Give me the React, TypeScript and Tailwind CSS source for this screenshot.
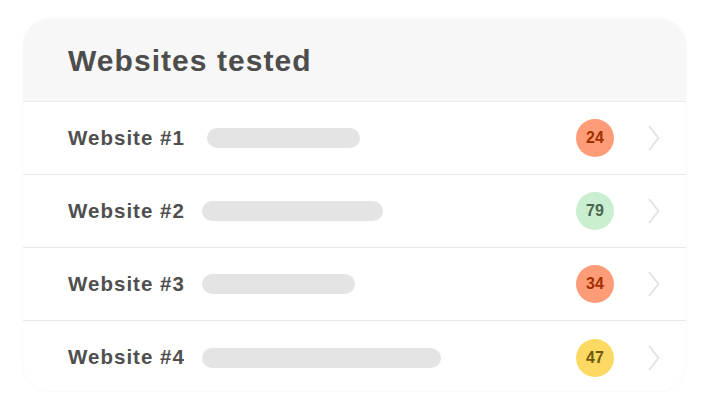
type Site = {
  name: string;
  barWidth: string;
  barOffset: string;
  score: number;
  badge: string;
};

const sites: Site[] = [
  { name: 'Website #1', barWidth: 'w-[153px]', barOffset: 'ml-[22px]', score: 24, badge: 'bg-[#ff9c78] text-[#a33000]' },
  { name: 'Website #2', barWidth: 'w-[181px]', barOffset: 'ml-[17px]', score: 79, badge: 'bg-[#c9efd0] text-[#4b6650]' },
  { name: 'Website #3', barWidth: 'w-[153px]', barOffset: 'ml-[17px]', score: 34, badge: 'bg-[#ff9c78] text-[#a33000]' },
  { name: 'Website #4', barWidth: 'w-[239px]', barOffset: 'ml-[17px]', score: 47, badge: 'bg-[#fdd963] text-[#6e5a0e]' },
];

function Chevron() {
  return (
    <svg width="12" height="26" viewBox="0 0 12 26" fill="none" className="shrink-0">
      <path d="M1.5 1.5 L10.5 13 L1.5 24.5" stroke="#e3e3e3" strokeWidth="2" strokeLinecap="round" strokeLinejoin="round" />
    </svg>
  );
}

export default function App() {
  return (
    <div className="w-[706px] h-[413px] bg-white pt-[18px] pl-[22px] font-['Liberation_Sans',Arial,sans-serif]">
      <div className="w-[665px] h-[374px] rounded-[28px] border border-[#fafafa] bg-white overflow-hidden">
        <div className="h-[83px] bg-[#f7f7f7] border-b border-[#ececec] flex items-center pl-[45px]">
          <h1 className="text-[30px] font-bold text-[#4d4d4d] tracking-[0.035em] leading-none mt-[2px]">
            Websites tested
          </h1>
        </div>
        {sites.map((site, i) => (
          <div
            key={site.name}
            className={`h-[73px] flex items-center pl-[45px] pr-[26px] ${
              i < sites.length - 1 ? 'border-b border-[#e8e8e8]' : ''
            }`}
          >
            <span className="text-[20.5px] font-bold text-[#4f4f4f] tracking-[0.05em] leading-none">
              {site.name}
            </span>
            <div className={`h-[20px] rounded-full bg-[#e4e4e4] ${site.barWidth} ${site.barOffset}`} />
            <div className="flex-1" />
            <div
              className={`w-[38px] h-[38px] rounded-full flex items-center justify-center text-[16px] font-bold ${site.badge}`}
            >
              {site.score}
            </div>
            <div className="ml-[34px]">
              <Chevron />
            </div>
          </div>
        ))}
      </div>
    </div>
  );
}
